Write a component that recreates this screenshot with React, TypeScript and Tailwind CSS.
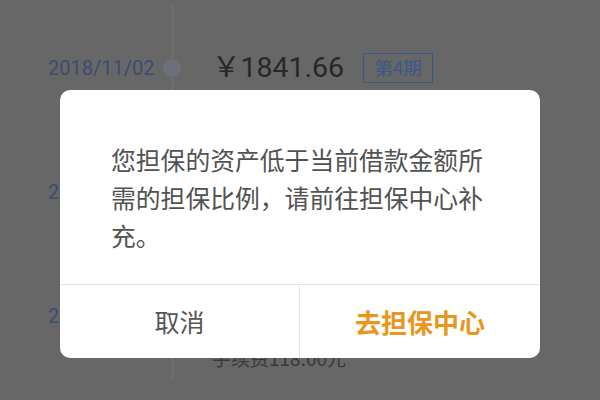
import React from "react";

const rows = [
  { date: "2018/11/02", amount: "￥1841.66", period: "第4期", fee: "手续费118.00元" },
  { date: "2018/12/02", amount: "￥1841.66", period: "第5期", fee: "手续费118.00元" },
  { date: "2019/01/02", amount: "￥1841.66", period: "第6期", fee: "手续费118.00元" },
];

export default function App() {
  return (
    <div
      className="relative w-[600px] h-[400px] overflow-hidden bg-[#676767]"
      style={{ fontFamily: '"Noto Sans CJK SC", "Noto Sans", sans-serif' }}
    >
      <div className="flex flex-col pt-[6px]">
        {rows.map((r, i) => (
          <div key={i} className="flex h-[124px]">
            <div
              className="w-[115px] pl-[48px] box-content flex items-center text-[20px] text-[#3b4d70] whitespace-nowrap"
              style={{ fontFamily: 'Roboto, "Noto Sans CJK SC", sans-serif' }}
            >
              {r.date}
            </div>
            <div className="w-[18px] flex flex-col items-center">
              <div className="flex-1 w-[3px] bg-[#6e6e6e]" />
              <div className="w-[18px] h-[18px] rounded-full bg-[#6d7179]" />
              <div className="flex-1 w-[3px] bg-[#6e6e6e]" />
            </div>
            <div className="ml-[31px] flex flex-col">
              <div className="mt-[44px] h-[36px] flex items-center">
                <span
                  className="text-[28.5px] text-[#282828] leading-none"
                  style={{ fontFamily: 'Roboto, "Noto Sans CJK SC", sans-serif' }}
                >
                  {r.amount}
                </span>
                <span className="ml-[19px] w-[70px] h-[30px] flex items-center justify-center border-[1.5px] border-[#3b5888] text-[18.5px] text-[#3b5888]">
                  {r.period}
                </span>
              </div>
              <div className="mt-[10px] h-[28px] flex items-center text-[19px] text-[#3a3a3a]">
                {r.fee}
              </div>
            </div>
          </div>
        ))}
      </div>

      <div className="absolute left-[60px] top-[90px] w-[480px] h-[268px] rounded-[10px] bg-white flex flex-col">
        <div className="flex-1 pl-[51px] pr-[48px] pt-[50px] text-[24.8px] leading-[38px] text-[#525252]">
          您担保的资产低于当前借款金额所需的担保比例，请前往担保中心补充。
        </div>
        <div className="h-[74px] border-t border-[#e4e4e4] grid grid-cols-2">
          <div className="flex items-center justify-center border-r border-[#e4e4e4] text-[25px] text-[#555555]">
            取消
          </div>
          <div className="flex items-center justify-center text-[26px] font-bold text-[#e8961c]">
            去担保中心
          </div>
        </div>
      </div>
    </div>
  );
}
